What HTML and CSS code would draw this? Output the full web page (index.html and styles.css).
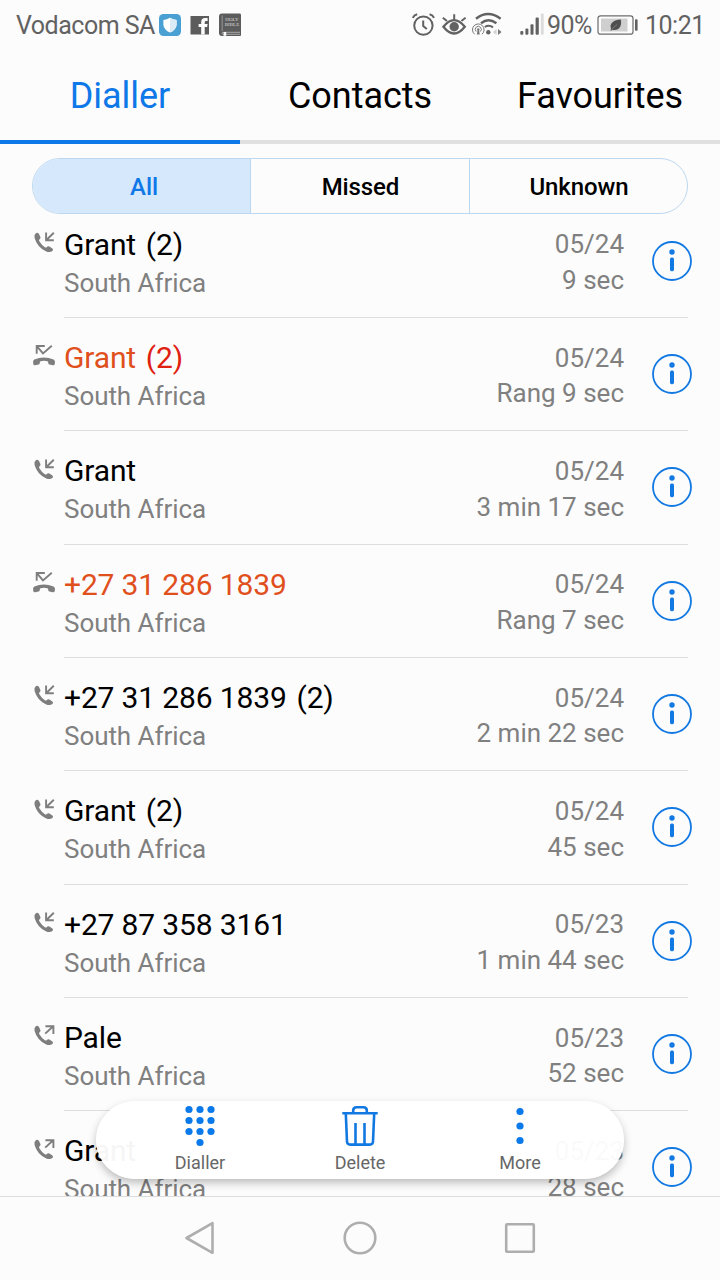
FILE: index.html
```html
<!DOCTYPE html>
<html lang="en">
<head>
  <meta charset="UTF-8" />
  <meta name="viewport" content="width=device-width, initial-scale=1.0"/>
  <title>Dialler</title>
  <link rel="stylesheet" href="styles.css">
</head>
<body>
  <!-- Shared icons -->
  <svg class="icon-defs" width="0" height="0">
    <symbol id="handset" viewBox="0 0 22 22">
      <path d="M2.8 1.2 Q4.6 .2 6 2 L7.4 5 Q8 6.4 6.4 7.6 Q5.8 8.2 6.2 9 Q8.4 13 12.2 15.4 Q13 15.8 13.6 15.2 Q15 13.8 16.4 14.6 L19.4 16.4 Q20.8 17.6 19.4 19 Q16.8 21 12.8 19.2 Q4.2 15.2 1.6 6 Q.8 2.8 2.8 1.2Z" fill="#7e7e7e"/>
    </symbol>
    <symbol id="incoming" viewBox="0 0 22 22">
      <use href="#handset" width="22" height="22"/>
      <path d="M20.8 .8 L13.4 8 M13.1 .6 V8.3 H20.8" fill="none" stroke="#7e7e7e" stroke-width="1.9"/>
    </symbol>
    <symbol id="outgoing" viewBox="0 0 22 22">
      <use href="#handset" width="22" height="22"/>
      <path d="M12.2 8.6 L20.2 1.2 M12.4 1.3 H20.4 V9" fill="none" stroke="#7e7e7e" stroke-width="1.9"/>
    </symbol>
    <symbol id="missed" viewBox="0 0 24 22">
      <path d="M4.7 8.8 V1 H12.8 M5 1.3 L11 8.4 L19.8 .8" fill="none" stroke="#7e7e7e" stroke-width="1.9"/>
      <path d="M1.2 18 Q.4 15.6 2.4 14.4 Q11.6 10.4 21.6 14.4 Q23.6 15.6 22.9 18 L22.7 19.3 Q22.2 20.6 20.8 20.3 L17.4 19.6 Q16.2 19.2 16.2 17.8 Q16.2 16.6 15.4 16.3 Q12 15.4 8.6 16.3 Q7.8 16.6 7.8 17.8 Q7.8 19.2 6.6 19.6 L3.2 20.3 Q1.8 20.6 1.3 19.3Z" fill="#7e7e7e"/>
    </symbol>
    <symbol id="info" viewBox="0 0 40 40">
      <circle cx="20" cy="20" r="19" fill="none" stroke="#1379e2" stroke-width="1.8"/>
      <circle cx="20" cy="11" r="2.7" fill="#1379e2"/>
      <rect x="18" y="16.6" width="4" height="13.6" rx="1.6" fill="#1379e2"/>
    </symbol>
  </svg>

  <div class="phone">
    <header class="status-bar">
      <span class="carrier">Vodacom SA</span>
      <svg class="notifications" width="86" height="24" viewBox="0 0 86 24">
        <rect x="1" y="1" width="22" height="22" rx="4.5" fill="#4a9fd3"/>
        <path d="M12 4.8 Q15 6.8 18.6 7 V12 Q18 17 12 19.6 Q6 17 5.4 12 V7 Q9 6.8 12 4.8Z" fill="#fff"/>
        <path d="M12 4.8 Q15 6.8 18.6 7 V12 Q18 17 12 19.6Z" fill="#dbecf7"/>
        <rect x="32.5" y="3" width="18.5" height="18.5" fill="#5c5c5c"/>
        <path d="M43.2 21.5 V14 H40.6 V11 H43.2 V9.2 Q43.2 5 47.2 5 H49.6 V8 H48 Q46.7 8 46.7 9.4 V11 H49.6 L49.1 14 H46.7 V21.5Z" fill="#fcfcfc"/>
        <path d="M64 .6 H81.5 Q83 .6 83 2 V22 Q83 23 82 23 H64 Q61 23 61 20 V3.6 Q61 .6 64 .6Z" fill="#5c5c5c"/>
        <path d="M64.2 2.5 V18" stroke="#9c9c9c" stroke-width=".9"/>
        <path d="M82 19.3 H64.6 Q63.2 20.3 64.6 21.3 H82" fill="none" stroke="#bbb" stroke-width=".8"/>
        <text x="74" y="7.8" class="bible-text">HOLY</text>
        <text x="74" y="12.7" class="bible-text">BIBLE</text>
        <path d="M65.6 19 H68.2 V23.5 L67 22.4 L65.6 23.5Z" fill="#fcfcfc"/>
      </svg>

      <svg class="indicators" width="134" height="28" viewBox="0 0 134 28">
        <g fill="none" stroke="#626262" stroke-width="2">
          <!-- alarm -->
          <circle cx="12.4" cy="14.6" r="9.2"/>
          <path d="M12.2 9.5 V15 L15.8 18"/>
          <path d="M1.8 6.8 Q3 4 6.2 3.2 M18.6 3.2 Q21.8 4 23 6.8"/>
          <!-- eye -->
          <path d="M32.4 15.8 Q43 2.4 53.8 15.8 Q43 29.2 32.4 15.8Z" stroke-width="2.3"/>
          <path d="M43.2 8.5 V3.2 M36 10 L31.8 6.8 M50.4 10 L54.6 6.8"/>
        </g>
        <circle cx="43.2" cy="15.8" r="4.7" fill="#626262"/>
        <!-- wifi -->
        <g fill="none" stroke="#626262" stroke-width="2.4">
          <path d="M65 7.8 Q77 -1.6 89.6 7.8"/>
          <path d="M70 12.2 Q77.4 6.4 85.4 12.2"/>
          <path d="M73.8 16 Q78 13.4 82 16.4" stroke-width="2"/>
        </g>
        <circle cx="77.3" cy="21.2" r="2.2" fill="#626262"/>
        <g fill="none" stroke="#777" stroke-width="1">
          <path d="M63.6 23.2 A5.8 5.8 0 1 1 71 23.2"/>
          <path d="M65.2 20.5 A3 3 0 1 1 69.4 20.5"/>
        </g>
        <circle cx="67.3" cy="18.5" r="1.2" fill="#777"/>
        <path d="M66.6 19 H68 L68.8 23.5 H65.8Z" fill="#777"/>
        <path d="M85.6 18 V24 L81.8 21Z" fill="#d4d4d4"/>
        <path d="M87 18 V24 L90.6 21Z" fill="#777"/>
        <!-- signal -->
        <g fill="#626262">
          <rect x="109.3" y="20" width="3" height="3.8" rx="1"/>
          <rect x="114.4" y="17.4" width="3" height="6.4" rx="1"/>
          <rect x="119.5" y="13.2" width="3" height="10.6" rx="1"/>
          <rect x="124.6" y="6.6" width="3.2" height="17.2" rx="1"/>
        </g>
        <rect x="129.9" y="2.6" width="2.8" height="21.2" rx="1" fill="#dcdcdc"/>
      </svg>
      <span class="percent">90%</span>
      <svg class="battery" width="42" height="22" viewBox="0 0 42 22">
        <rect x="1" y="1.8" width="35" height="18.4" rx="2.5" fill="none" stroke="#6c6c6c" stroke-width="1.2"/>
        <rect x="4" y="4.5" width="26.5" height="13" fill="#cfcfcf"/>
        <rect x="38" y="5.3" width="2.6" height="11.5" rx=".8" fill="#626262"/>
        <path d="M23.8 5.5 C25.3 12 22 17 15.5 15.8 L13.5 17 L14 14.6 C12 9 17 6 23.8 5.5Z" fill="#4f4f4f"/>
        <path d="M14.5 15.5 L20 10.5" stroke="#aaa" stroke-width=".5"/>
      </svg>
      <span class="clock">10:21</span>
    </header>

    <nav class="tabs">
      <a class="tab active">Dialler</a>
      <a class="tab">Contacts</a>
      <a class="tab">Favourites</a>
    </nav>

    <div class="filter">
      <button class="active">All</button>
      <button>Missed</button>
      <button>Unknown</button>
    </div>

    <main class="call-list">
      <div class="call">
        <svg class="call-icon"><use href="#incoming"/></svg>
        <div class="call-body">
          <div class="who"><div class="name">Grant <span class="count">(2)</span></div><div class="place">South Africa</div></div>
          <div class="when">05/24<br>9 sec</div>
          <svg class="info"><use href="#info"/></svg>
        </div>
      </div>
      <div class="call missed">
        <svg class="call-icon"><use href="#missed"/></svg>
        <div class="call-body">
          <div class="who"><div class="name">Grant <span class="count">(2)</span></div><div class="place">South Africa</div></div>
          <div class="when">05/24<br>Rang 9 sec</div>
          <svg class="info"><use href="#info"/></svg>
        </div>
      </div>
      <div class="call">
        <svg class="call-icon"><use href="#incoming"/></svg>
        <div class="call-body">
          <div class="who"><div class="name">Grant</div><div class="place">South Africa</div></div>
          <div class="when">05/24<br>3 min 17 sec</div>
          <svg class="info"><use href="#info"/></svg>
        </div>
      </div>
      <div class="call missed">
        <svg class="call-icon"><use href="#missed"/></svg>
        <div class="call-body">
          <div class="who"><div class="name">+27 31 286 1839</div><div class="place">South Africa</div></div>
          <div class="when">05/24<br>Rang 7 sec</div>
          <svg class="info"><use href="#info"/></svg>
        </div>
      </div>
      <div class="call">
        <svg class="call-icon"><use href="#incoming"/></svg>
        <div class="call-body">
          <div class="who"><div class="name">+27 31 286 1839 <span class="count">(2)</span></div><div class="place">South Africa</div></div>
          <div class="when">05/24<br>2 min 22 sec</div>
          <svg class="info"><use href="#info"/></svg>
        </div>
      </div>
      <div class="call">
        <svg class="call-icon"><use href="#incoming"/></svg>
        <div class="call-body">
          <div class="who"><div class="name">Grant <span class="count">(2)</span></div><div class="place">South Africa</div></div>
          <div class="when">05/24<br>45 sec</div>
          <svg class="info"><use href="#info"/></svg>
        </div>
      </div>
      <div class="call">
        <svg class="call-icon"><use href="#incoming"/></svg>
        <div class="call-body">
          <div class="who"><div class="name">+27 87 358 3161</div><div class="place">South Africa</div></div>
          <div class="when">05/23<br>1 min 44 sec</div>
          <svg class="info"><use href="#info"/></svg>
        </div>
      </div>
      <div class="call">
        <svg class="call-icon"><use href="#outgoing"/></svg>
        <div class="call-body">
          <div class="who"><div class="name">Pale</div><div class="place">South Africa</div></div>
          <div class="when">05/23<br>52 sec</div>
          <svg class="info"><use href="#info"/></svg>
        </div>
      </div>
      <div class="call">
        <svg class="call-icon"><use href="#outgoing"/></svg>
        <div class="call-body">
          <div class="who"><div class="name">Grant</div><div class="place">South Africa</div></div>
          <div class="when">05/23<br>28 sec</div>
          <svg class="info"><use href="#info"/></svg>
        </div>
      </div>

      <!-- Floating toolbar -->
      <div class="toolbar">
        <div class="tool">
          <svg width="40" height="44" viewBox="0 0 40 44" fill="#0a79ea">
            <circle cx="9" cy="5.5" r="3.6"/><circle cx="20" cy="5.5" r="3.6"/><circle cx="31" cy="5.5" r="3.6"/>
            <circle cx="9" cy="16.5" r="3.6"/><circle cx="20" cy="16.5" r="3.6"/><circle cx="31" cy="16.5" r="3.6"/>
            <circle cx="9" cy="27.5" r="3.6"/><circle cx="20" cy="27.5" r="3.6"/><circle cx="31" cy="27.5" r="3.6"/>
            <circle cx="20" cy="38.5" r="3.6"/>
          </svg>
          <span>Dialler</span>
        </div>
        <div class="tool">
          <svg width="40" height="44" viewBox="0 0 40 44" fill="none" stroke="#1379e2" stroke-width="2.6">
            <path d="M2.3 9.3 H37.7"/>
            <path d="M13.2 9 V6.5 Q13.2 3.2 16.5 3.2 H23.5 Q26.8 3.2 26.8 6.5 V9"/>
            <path d="M5.8 9.5 L7 37.5 Q7.2 40.6 10.2 40.6 H29.8 Q32.8 40.6 33 37.5 L34.2 9.5"/>
            <path d="M15.5 19 V40 M24.5 19 V40"/>
          </svg>
          <span>Delete</span>
        </div>
        <div class="tool">
          <svg width="40" height="44" viewBox="0 0 40 44" fill="#0a79ea">
            <circle cx="20" cy="7.5" r="3.6"/>
            <circle cx="20" cy="22" r="3.6"/>
            <circle cx="20" cy="36.5" r="3.6"/>
          </svg>
          <span>More</span>
        </div>
      </div>
    </main>

    <footer class="nav-bar">
      <svg width="34" height="36" viewBox="0 0 34 36"><path d="M3.5 18 L29.5 3.2 V32.8Z"/></svg>
      <svg width="34" height="36" viewBox="0 0 34 36"><circle cx="17" cy="18" r="15.3"/></svg>
      <svg width="34" height="36" viewBox="0 0 34 36"><rect x="3.2" y="4.2" width="27.6" height="27.6" rx="1"/></svg>
    </footer>
  </div>
</body>
</html>
```
FILE: styles.css
```css
* {
  box-sizing: border-box;
}

body {
  margin: 0;
  background-color: #fcfcfc;
  font-family: Roboto, "Liberation Sans", sans-serif;
  color: #000;
}

svg {
  display: block;
  flex-shrink: 0;
}

.icon-defs {
  position: absolute;
}

.phone {
  width: 720px;
  height: 1280px;
  display: flex;
  flex-direction: column;
  overflow: hidden;
}

/* Status bar */
.status-bar {
  height: 48px;
  padding: 2px 16px 0 16px;
  display: flex;
  align-items: center;
  font-size: 25px;
  letter-spacing: -0.5px;
  color: #626262;
  white-space: nowrap;
}

.carrier {
  width: 142px;
}

.bible-text {
  font-family: "Liberation Serif", serif;
  font-size: 5px;
  letter-spacing: 0;
  fill: #ddd;
  text-anchor: middle;
}

.indicators {
  margin-left: auto;
}

.percent {
  width: 45px;
  margin: 0 5px 0 2px;
}

.clock {
  width: 59px;
  margin-left: 6px;
}

/* Tabs */
.tabs {
  height: 96px;
  display: grid;
  grid-template-columns: repeat(3, 1fr);
}

.tab {
  display: flex;
  align-items: center;
  justify-content: center;
  padding-top: 4px;
  font-size: 36px;
  letter-spacing: -0.05px;
  border-bottom: 4px solid #e0e0e0;
}

.tab.active {
  color: #0f78e8;
  border-color: #0f78e8;
}

/* Filter */
.filter {
  height: 56px;
  margin: 14px 32px 0;
  display: grid;
  grid-template-columns: 217px 219px 1fr;
  border: 1px solid #bcd8f0;
  border-radius: 28px;
  overflow: hidden;
  flex-shrink: 0;
}

.filter button {
  padding: 2px 0 0 1px;
  border: none;
  border-left: 1px solid #bcd8f0;
  background: none;
  font-family: inherit;
  font-size: 24px;
  font-weight: 500;
  letter-spacing: -0.1px;
  color: #000;
}

.filter button.active {
  padding-left: 5px;
  border-left: none;
  background-color: #d5e8fc;
  color: #0f78e8;
}

/* Call list */
.call-list {
  position: relative;
  height: 982px;
  overflow: hidden;
  flex-shrink: 0;
}

.call {
  height: 113.33px;
  padding: 0 32px;
  display: flex;
}

.call:first-child {
  margin-top: -9.4px;
}

.call-icon {
  width: 24px;
  height: 22px;
  margin-top: 27.4px;
}

.call-body {
  flex: 1;
  display: flex;
  margin-left: 8px;
  border-bottom: 1px solid #dedede;
}

.who {
  flex: 1;
  padding-top: 21px;
  line-height: 38px;
}

.name {
  font-size: 30px;
  letter-spacing: -0.14px;
}

.count {
  margin-left: 2.5px;
}

.place {
  font-size: 26px;
  letter-spacing: -0.06px;
  color: #808080;
}

.when {
  padding-top: 22.8px;
  font-size: 26px;
  line-height: 35.5px;
  text-align: right;
  color: #808080;
}

.missed .name {
  color: #e0501c;
}

.missed .count {
  color: #e02010;
}

.info {
  width: 40px;
  height: 40px;
  margin: 36px -4px 0 28px;
}

/* Floating toolbar */
.toolbar {
  position: absolute;
  left: 96px;
  top: 887px;
  width: 528px;
  height: 78px;
  padding: 0 24px;
  display: grid;
  grid-template-columns: repeat(3, 1fr);
  border-radius: 39px;
  background-color: rgba(255, 255, 255, 0.96);
  box-shadow: 0 4px 9px rgba(0, 0, 0, 0.25);
}

.tool {
  display: flex;
  flex-direction: column;
  align-items: center;
  padding-top: 3px;
  font-size: 18px;
  color: #666;
}

.tool span {
  margin-top: 4px;
}

/* Navigation bar */
.nav-bar {
  height: 84px;
  padding: 0 120px 2px;
  display: grid;
  grid-template-columns: repeat(3, 1fr);
  align-items: center;
  justify-items: center;
  border-top: 1px solid #dcdcdc;
}

.nav-bar svg {
  fill: none;
  stroke: #aeaeae;
  stroke-width: 2.6;
  stroke-linejoin: round;
}
```
